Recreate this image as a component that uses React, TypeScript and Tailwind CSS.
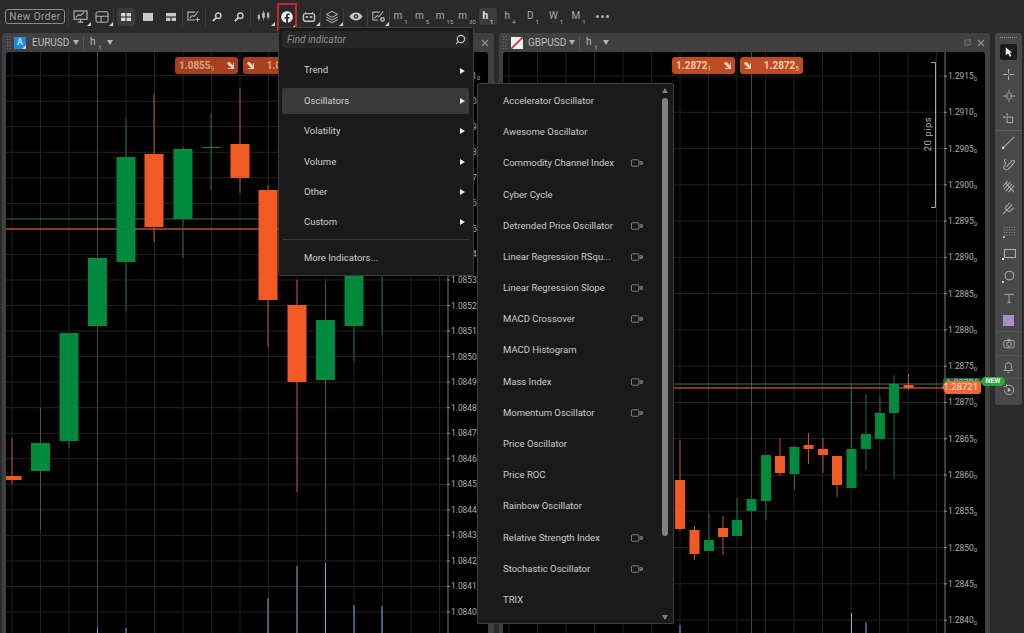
import React from "react";
import { FaFacebook } from "react-icons/fa";
import { Search } from "lucide-react";

type C = [number, number, number, number, number, "g" | "o"];
const ORANGE = "#f15a22";
const GREEN = "#008a3e";

const leftCandles: C[] = [
  [12, 476, 480, 438, 484, "o"],
  [40.5, 443, 471, 408, 530, "g"],
  [69, 333, 441, 333, 448, "g"],
  [97.5, 258, 326, 258, 326, "g"],
  [126, 157, 262, 118, 311, "g"],
  [154, 154, 227, 93, 242, "o"],
  [183, 149, 219, 147, 258, "g"],
  [211, 147, 148, 113, 190, "g"],
  [240, 144, 178, 88, 193, "o"],
  [268, 190, 300, 185, 347, "o"],
  [297, 305, 382, 280, 492, "o"],
  [325.5, 320, 380, 282, 560, "g"],
  [354, 260, 326, 250, 362, "g"],
  [382, 255, 265, 250, 335, "g"],
];
const rightCandles: C[] = [
  [680, 480, 529, 440, 531, "o"],
  [694.5, 530, 554, 526, 560, "o"],
  [709, 540, 551, 513, 551, "g"],
  [723, 528, 537, 516, 555, "o"],
  [737, 520, 536, 498, 536, "g"],
  [751.5, 499, 511, 499, 511, "g"],
  [766, 455, 501, 455, 520, "g"],
  [780, 456, 473, 438, 476, "o"],
  [794.5, 447, 474, 446, 490, "g"],
  [808.5, 445, 449, 433, 464, "o"],
  [823, 449, 455, 438, 473, "o"],
  [837, 456, 485, 456, 497, "o"],
  [851.5, 449, 488, 383, 488, "g"],
  [866, 434, 449, 394, 470, "g"],
  [880, 413, 439, 396, 439, "g"],
  [894, 384, 413, 375, 479, "g"],
  [908.5, 385, 388, 374, 390, "o"],
];

function Candles({ data, w }: { data: C[]; w: number }) {
  return (
    <g>
      {data.map(([x, t, b, wt, wb, c], i) => (
        <g key={i}>
          <line x1={x} x2={x} y1={wt} y2={wb} stroke={c === "g" ? "#17703f" : "#b9553a"} strokeWidth={1} />
          <rect x={x - w / 2} y={t} width={w} height={b - t} fill={c === "g" ? GREEN : ORANGE} />
        </g>
      ))}
    </g>
  );
}

function Axis({ x, labels }: { x: number; labels: [number, string, string][] }) {
  return (
    <g fontFamily="Roboto, sans-serif" fontSize={8.4} fill="#b0b0b0">
      {labels.map(([y, t, s]) => (
        <g key={t}>
          <line x1={x - 1} x2={x + 2} y1={y} y2={y} stroke="#8f8f8f" />
          <text x={x + 3} y={y + 3}>
            {t}
            <tspan fontSize={6} dy={1.5}>{s}</tspan>
          </text>
        </g>
      ))}
    </g>
  );
}

function LeftChart() {
  const vs = Array.from({ length: 16 }, (_, i) => 12 + 28.5 * i);
  const hs = Array.from({ length: 23 }, (_, i) => 612 - 25.54 * 22 + 25.54 * i);
  const labels: [number, string, string][] = Array.from({ length: 22 }, (_, i) => [
    612 - 25.54 * i,
    (1.084 + i * 0.0001).toFixed(4),
    "0",
  ]);
  return (
    <svg viewBox="6 52 482 581" className="block w-[482px] h-[581px]">
      <rect x="6" y="52" width="482" height="581" fill="#000" />
      {vs.map((x) => (x < 448 ? <line key={x} x1={x} x2={x} y1={52} y2={633} stroke="#232323" /> : null))}
      {hs.map((y) => (
        <line key={y} x1={6} x2={448} y1={y} y2={y} stroke="#232323" />
      ))}
      <line x1={97.5} x2={97.5} y1={52} y2={633} stroke="#444c46" />
      <line x1={6} x2={448} y1={219} y2={219} stroke="#2c6a47" />
      <line x1={6} x2={448} y1={229} y2={229} stroke="#f0703a" />
      <Candles data={leftCandles} w={19} />
      {[[97.5, 628], [126, 628], [268, 598], [297, 566], [325.5, 563], [354, 605], [382, 606]].map(([x, y]) => (
        <line key={x} x1={x} x2={x} y1={y} y2={633} stroke="#6fb0e0" />
      ))}
      <line x1={448} x2={448} y1={52} y2={633} stroke="#7a7a7a" />
      <Axis x={448} labels={labels} />
    </svg>
  );
}

function RightChart() {
  const vs = Array.from({ length: 16 }, (_, i) => 509 + 28.5 * i);
  const labels: [number, string, string][] = Array.from({ length: 16 }, (_, i) => [
    76 + 36.27 * i,
    (1.2915 - i * 0.0005).toFixed(4),
    "0",
  ]);
  return (
    <svg viewBox="503 52 482 581" className="block w-[482px] h-[581px]">
      <rect x="503" y="52" width="482" height="581" fill="#000" />
      {vs.map((x) => (x < 945 ? <line key={x} x1={x} x2={x} y1={52} y2={633} stroke="#232323" /> : null))}
      {labels.map(([y]) => (
        <line key={y} x1={503} x2={945} y1={y} y2={y} stroke="#232323" />
      ))}
      <line x1={751.5} x2={751.5} y1={52} y2={633} stroke="#444c46" />
      <line x1={503} x2={945} y1={384} y2={384} stroke="#3a7a55" />
      <line x1={503} x2={945} y1={388} y2={388} stroke="#f0703a" />
      <Candles data={rightCandles} w={10} />
      {[[680, 625], [851.5, 613], [866, 622]].map(([x, y]) => (
        <line key={x} x1={x} x2={x} y1={y} y2={633} stroke="#6fb0e0" />
      ))}
      <path d="M931 62.5H935.5V207.5H931" fill="none" stroke="#a8a8a8" />
      <text
        x={931}
        y={134}
        transform="rotate(-90 931 134)"
        textAnchor="middle"
        fontFamily="Roboto, sans-serif"
        fontSize={9.5}
        letterSpacing={0.5}
        fill="#a8a8a8"
      >
        20 pips
      </text>
      <line x1={945} x2={945} y1={52} y2={633} stroke="#7a7a7a" />
      <Axis x={945} labels={labels} />
    </svg>
  );
}

const Sep = () => <div className="w-px h-[18px] bg-[#3e3e3e] shrink-0" />;
const Corner = () => (
  <svg viewBox="0 0 4 4" className="absolute right-0 bottom-0 w-[4px] h-[4px]">
    <path d="M4 0V4H0Z" fill="#d0d0d0" />
  </svg>
);

function TB({ cls, children, corner }: { cls: string; children: React.ReactNode; corner?: boolean }) {
  return (
    <div className={`relative h-[18px] shrink-0 flex items-center justify-center ${cls}`}>
      {children}
      {corner && <Corner />}
    </div>
  );
}

function TF({ cls, l, n, active }: { cls: string; l: string; n: string; active?: boolean }) {
  return (
    <div
      className={`h-[17px] shrink-0 flex items-start justify-center pt-[2px] ${cls} ${
        active ? "bg-[#3c3c3c] rounded-[3px] text-[#e6e6e6] font-bold" : "text-[#aaaaaa]"
      }`}
    >
      <span className="text-[10px] leading-[11px]">{l}</span>
      <span className="text-[6px] leading-[7px] mt-[8px] ml-[2px] font-normal">{n}</span>
    </div>
  );
}

const stroke = { fill: "none", stroke: "#b4b4b4", strokeWidth: 1.2 } as const;

function Toolbar() {
  return (
    <div className="h-[33px] shrink-0 flex items-center pl-[5px] bg-[#2a2a2a]">
      <div className="w-[60px] h-[15px] shrink-0 flex items-center justify-center border border-[#8a8a8a] rounded-[3px] text-[10px] tracking-[0.5px] text-[#a0a0a0]">
        New Order
      </div>
      <div className="w-[3px] shrink-0" />
      <Sep />
      <TB cls="w-[22px]" corner>
        <svg viewBox="0 0 16 14" className="w-[15px] h-[13px]" {...stroke}>
          <rect x="1" y="1" width="14" height="9" />
          <path d="M3 8l3-3 2 1 4-4M8 10v3M5 13h6" />
        </svg>
      </TB>
      <TB cls="w-[22px]" corner>
        <svg viewBox="0 0 16 14" className="w-[14px] h-[12px]" {...stroke}>
          <rect x="1" y="1" width="14" height="12" rx="2" />
          <path d="M1 6h14M7 6v7" />
        </svg>
      </TB>
      <Sep />
      <div className="w-[3px] shrink-0" />
      <TB cls="w-[18px] bg-[#3c3c3c] rounded-[3px]">
        <svg viewBox="0 0 10 8" className="w-[10px] h-[8px]" fill="#d6d6d6">
          <rect width="4.4" height="3.4" />
          <rect x="5.6" width="4.4" height="3.4" />
          <rect y="4.6" width="4.4" height="3.4" />
          <rect x="5.6" y="4.6" width="4.4" height="3.4" />
        </svg>
      </TB>
      <div className="w-[2px] shrink-0" />
      <TB cls="w-[22px]">
        <div className="w-[10px] h-[8px] bg-[#c8c8c8]" />
      </TB>
      <TB cls="w-[23px]">
        <svg viewBox="0 0 10 8" className="w-[10px] h-[8px]" fill="#c8c8c8">
          <rect width="10" height="3.4" />
          <rect y="4.6" width="4.4" height="3.4" />
          <rect x="5.6" y="4.6" width="4.4" height="3.4" />
        </svg>
      </TB>
      <Sep />
      <TB cls="w-[22px]">
        <svg viewBox="0 0 16 14" className="w-[14px] h-[13px]" {...stroke}>
          <path d="M9 2H1v9h8M3 9l3-3 2 1 5-6" />
          <path d="M12 8v5M9.5 10.5h5" />
        </svg>
      </TB>
      <Sep />
      <TB cls="w-[22px]">
        <svg viewBox="0 0 12 12" className="w-[10px] h-[10px]" fill="none" stroke="#c4c4c4" strokeWidth="1.8">
          <circle cx="7.5" cy="4.5" r="3.2" />
          <path d="M5 7L1 11" strokeWidth="2.4" />
        </svg>
      </TB>
      <TB cls="w-[22px]">
        <svg viewBox="0 0 12 12" className="w-[10px] h-[10px]" fill="none" stroke="#c4c4c4" strokeWidth="1.8">
          <circle cx="7.5" cy="4.5" r="3.2" />
          <path d="M5 7L1 11" strokeWidth="2.4" />
        </svg>
      </TB>
      <Sep />
      <TB cls="w-[24px]" corner>
        <svg viewBox="0 0 14 14" className="w-[13px] h-[13px]" fill="#b8b8b8" stroke="#b8b8b8">
          <path d="M2 4v8M7 1v10M12 2v8" strokeWidth="0.8" />
          <rect x="0.8" y="5.5" width="2.4" height="4" stroke="none" />
          <rect x="5.6" y="3" width="2.8" height="5.5" stroke="none" />
          <rect x="10.8" y="3" width="2.4" height="5" stroke="none" />
        </svg>
      </TB>
      <div className="w-[2px] shrink-0" />
      <div className="relative w-[20px] h-[28px] shrink-0 flex items-center justify-center border-2 border-[#c1272d]">
        <FaFacebook className="w-[12px] h-[12px] text-[#ececec]" />
        <Corner />
      </div>
      <TB cls="w-[23px]" corner>
        <svg viewBox="0 0 16 14" className="w-[14px] h-[12px]">
          <rect x="1.5" y="3" width="13" height="9" rx="2.5" fill="none" stroke="#c4c4c4" strokeWidth="1.6" />
          <rect x="4" y="6" width="3" height="2" fill="#c4c4c4" />
          <rect x="9" y="6" width="3" height="2" fill="#c4c4c4" />
          <path d="M4 3V1M12 3V1" stroke="#c4c4c4" />
        </svg>
      </TB>
      <Sep />
      <TB cls="w-[22px]" corner>
        <svg viewBox="0 0 16 16" className="w-[14px] h-[14px]" fill="none" stroke="#bdbdbd" strokeWidth="1.1">
          <path d="M8 1.5l6.5 3.5L8 8.5 1.5 5z" />
          <path d="M1.5 8L8 11.5 14.5 8M1.5 11L8 14.5 14.5 11" />
        </svg>
      </TB>
      <Sep />
      <TB cls="w-[23px]">
        <svg viewBox="0 0 16 10" className="w-[14px] h-[9px]">
          <path d="M0.5 5C3 1.5 5.5 0.5 8 0.5S13 1.5 15.5 5C13 8.5 10.5 9.5 8 9.5S3 8.5 0.5 5Z" fill="#c8c8c8" />
          <circle cx="8" cy="5" r="2.6" fill="#2a2a2a" />
          <circle cx="8" cy="5" r="1.2" fill="#c8c8c8" />
        </svg>
      </TB>
      <Sep />
      <TB cls="w-[21px]" corner>
        <svg viewBox="0 0 16 14" className="w-[14px] h-[13px]" {...stroke}>
          <path d="M9 2H1v9h6M3 9l3-3 2 1 5-6" />
          <circle cx="12" cy="10.5" r="2" strokeWidth="1.6" />
        </svg>
      </TB>
      <Sep />
      <TF cls="w-[21px]" l="m" n="1" />
      <TF cls="w-[22px]" l="m" n="5" />
      <TF cls="w-[23px]" l="m" n="15" />
      <TF cls="w-[22px]" l="m" n="30" />
      <TF cls="w-[18px] ml-px mr-px" l="h" n="1" active />
      <TF cls="w-[22px] ml-px" l="h" n="4" />
      <TF cls="w-[24px]" l="D" n="1" />
      <TF cls="w-[22px]" l="W" n="1" />
      <TF cls="w-[23px]" l="M" n="1" />
      <TB cls="w-[24px] gap-[2px]">
        <span className="w-[3px] h-[3px] rounded-full bg-[#b0b0b0]" />
        <span className="w-[3px] h-[3px] rounded-full bg-[#b0b0b0]" />
        <span className="w-[3px] h-[3px] rounded-full bg-[#b0b0b0]" />
      </TB>
    </div>
  );
}

const Grip = () => (
  <svg viewBox="0 0 4 13" className="w-[4px] h-[13px] shrink-0" fill="#6c6c6c">
    {[0, 3, 6, 9, 12].map((y) => (
      <g key={y}>
        <rect x="0" y={y} width="1.2" height="1.2" />
        <rect x="2.6" y={y} width="1.2" height="1.2" />
      </g>
    ))}
  </svg>
);
const Drop = () => (
  <svg viewBox="0 0 6 5" className="w-[6px] h-[5px] shrink-0" fill="#b8b8b8">
    <path d="M0 0h6L3 5z" />
  </svg>
);
const Close = () => (
  <svg viewBox="0 0 8 8" className="w-[8px] h-[8px] shrink-0" stroke="#8f8f8f" strokeWidth="1.2">
    <path d="M1 1l6 6M7 1L1 7" />
  </svg>
);
const TfLabel = () => (
  <div className="flex items-start text-[#b8b8b8] mr-[2px] h-[14px] w-[15px]">
    <span className="text-[10px] leading-[11px]">h</span>
    <span className="text-[6px] leading-[7px] ml-[3px] mt-[8px]">1</span>
  </div>
);

function Tag({ cls, children }: { cls: string; children: React.ReactNode }) {
  return (
    <div
      className={`absolute top-[5px] w-[63px] h-[17px] rounded-[3px] flex items-center justify-between px-[4px] text-[10px] font-bold ${cls}`}
    >
      {children}
    </div>
  );
}
const DownArrow = () => (
  <svg viewBox="0 0 8 8" className="w-[7px] h-[7px] shrink-0" fill="#e0cfc6">
    <path d="M1 0h2l4 4V1h1v7H1V6.8h4L0 2z" />
  </svg>
);

function Panel({ cls, header, children }: { cls: string; header: React.ReactNode; children: React.ReactNode }) {
  return (
    <div className={`flex flex-col bg-[#404040] rounded-t-[3px] shrink-0 ${cls}`}>
      <div className="h-[19px] shrink-0 flex items-center">{header}</div>
      <div className="relative flex-1 overflow-hidden rounded-t-[3px] ml-[4px] w-[482px]">{children}</div>
    </div>
  );
}

const T = "w-[27px] h-[22px] shrink-0 flex items-center justify-center";
const tool = { fill: "none", stroke: "#adadad", strokeWidth: 1.1 } as const;

function ToolPanel() {
  return (
    <div className="w-[27px] h-[372px] shrink-0 bg-[#484848] rounded-[3px] pt-[8px] flex flex-col items-center relative">
      <div className="absolute top-[4px] left-[5px] w-[17px] h-[2px] border-t border-dotted border-[#8a8a8a]" />
      <div className={T}>
        <div className="w-[17px] h-[16px] bg-[#1b1b1b] rounded-[2px] flex items-center justify-center">
          <svg viewBox="0 0 10 12" className="w-[8px] h-[10px]" fill="#ededed">
            <path d="M1 0l8 7H6l2 4-2 1-2-4-3 2z" />
          </svg>
        </div>
      </div>
      <div className={T}>
        <svg viewBox="0 0 12 12" className="w-[11px] h-[11px]" {...tool}>
          <path d="M6 0v5M6 7v5M0 6h5M7 6h5" />
        </svg>
      </div>
      <div className={T}>
        <svg viewBox="0 0 12 12" className="w-[12px] h-[12px]" {...tool}>
          <path d="M6 0v4M6 8v4M0 6h4M8 6h4M4 3v6M8 3v6" strokeWidth="0.9" />
        </svg>
      </div>
      <div className={T}>
        <svg viewBox="0 0 12 12" className="w-[11px] h-[11px]" {...tool}>
          <path d="M4.5 0v3M0 4.5h3" />
          <rect x="4.5" y="4.5" width="6" height="6" />
        </svg>
      </div>
      <div className="w-[27px] h-[2px] border-b border-[#5e5e5e] shrink-0" />
      <div className={T}>
        <svg viewBox="0 0 14 14" className="w-[13px] h-[13px]" {...tool}>
          <path d="M1 13L13 1" />
          <rect x="0" y="11.5" width="2.4" height="2.4" fill="#d0d0d0" stroke="none" />
        </svg>
      </div>
      <div className={T}>
        <svg viewBox="0 0 14 14" className="w-[13px] h-[13px]" {...tool}>
          <path d="M4 1C0 3 6 5 3 8s1 6 4 4l6-7a1.5 1.5 0 0 0-2.5-2L5 9.5" />
        </svg>
      </div>
      <div className={T}>
        <svg viewBox="0 0 14 14" className="w-[13px] h-[13px]" {...tool}>
          <path d="M1 7l5-6M2 10l7-8M4 12l7-8M7 13l6-7M4 3l9 10" />
        </svg>
      </div>
      <div className={T}>
        <svg viewBox="0 0 14 14" className="w-[13px] h-[13px]" {...tool}>
          <path d="M1 13l4-4M5 9L3.5 6 8 1M5 9l3 1.5 5-4.5M5 9l6-6.5" />
        </svg>
      </div>
      <div className="w-[27px] h-[2px] shrink-0" />
      <div className={T}>
        <svg viewBox="0 0 14 14" className="w-[12px] h-[12px]" fill="#a8a8a8">
          {[1, 4, 7, 10].map((y) =>
            [1, 4, 7, 10, 13].map((x) => <rect key={`${x}-${y}`} x={x} y={y} width="1" height="1" />)
          )}
          <rect x="0" y="12" width="2" height="2" fill="#e0e0e0" />
        </svg>
      </div>
      <div className={T}>
        <svg viewBox="0 0 14 12" className="w-[14px] h-[12px]" {...tool}>
          <rect x="2.5" y="1.5" width="11" height="8" />
          <rect x="0" y="10" width="2" height="2" fill="#e0e0e0" stroke="none" />
        </svg>
      </div>
      <div className={T}>
        <svg viewBox="0 0 14 14" className="w-[13px] h-[13px]" {...tool}>
          <circle cx="8" cy="6" r="4.7" />
          <rect x="0" y="12" width="2" height="2" fill="#e0e0e0" stroke="none" />
        </svg>
      </div>
      <div className={T}>
        <svg viewBox="0 0 12 12" className="w-[10px] h-[11px]" {...tool}>
          <path d="M1 2V1h10v1M6 1v10M4 11h4" />
        </svg>
      </div>
      <div className={T}>
        <div className="w-[11px] h-[11px] bg-[#a98bc9]" />
      </div>
      <div className="w-[27px] h-[1px] bg-[#525252] shrink-0" />
      <div className={T}>
        <svg viewBox="0 0 14 12" className="w-[12px] h-[11px]" {...tool}>
          <rect x="1" y="2.5" width="12" height="8.5" rx="2" />
          <circle cx="7" cy="6.7" r="2.7" />
          <path d="M5 2.5l1-1.5h2l1 1.5" />
        </svg>
      </div>
      <div className="w-[27px] h-[2px] shrink-0 border-b border-[#525252]" />
      <div className={T}>
        <svg viewBox="0 0 12 14" className="w-[11px] h-[12px]" {...tool}>
          <path d="M1 11h10L9.5 9V5.5a3.5 3.5 0 0 0-7 0V9zM6 1v1M4.5 13h3" />
        </svg>
      </div>
      <div className="w-[27px] h-[1px] shrink-0 bg-[#525252]" />
      <div className={T}>
        <svg viewBox="0 0 14 14" className="w-[12px] h-[12px]" {...tool}>
          <path d="M4 2.2A5.5 5.5 0 1 1 1.5 7M4 0v3H1" />
          <path d="M5.5 4.5l4 2.5-4 2.5z" fill="#bcbcbc" stroke="none" />
        </svg>
      </div>
    </div>
  );
}

const Arrow = () => (
  <svg viewBox="0 0 5 6" className="w-[5px] h-[6px] shrink-0" fill="#e8e8e8">
    <path d="M0 0l5 3-5 3z" />
  </svg>
);
const Cam = () => (
  <svg viewBox="0 0 13 8" className="w-[12px] h-[8px] shrink-0" fill="none" stroke="#969696" strokeWidth="0.9">
    <rect x="0.5" y="0.5" width="8" height="7" rx="1.2" />
    <path d="M9.5 3.8L11 1.8v4.4zM12.4 2.5v3" />
  </svg>
);

const m1 = ["Trend", "Oscillators", "Volatility", "Volume", "Other", "Custom"];
const m2: [string, boolean][] = [
  ["Accelerator Oscillator", false],
  ["Awesome Oscillator", false],
  ["Commodity Channel Index", true],
  ["Cyber Cycle", false],
  ["Detrended Price Oscillator", true],
  ["Linear Regression RSqu...", true],
  ["Linear Regression Slope", true],
  ["MACD Crossover", true],
  ["MACD Histogram", false],
  ["Mass Index", true],
  ["Momentum Oscillator", true],
  ["Price Oscillator", false],
  ["Price ROC", false],
  ["Rainbow Oscillator", false],
  ["Relative Strength Index", true],
  ["Stochastic Oscillator", true],
  ["TRIX", false],
];

export default function App() {
  return (
    <div className="relative w-[1024px] h-[633px] overflow-hidden flex flex-col bg-[#2a2a2a] font-['Roboto',Arial,sans-serif]">
      <Toolbar />
      <div className="flex-1 min-h-0 flex pl-[2px]">
        <Panel
          cls="w-[492px]"
          header={
            <>
              <div className="w-[5px]" />
              <Grip />
              <div className="relative ml-[3px] w-[12px] h-[12px] bg-[#1e88e5] flex items-center justify-center text-[9px] text-white shrink-0">
                A
                <Corner />
              </div>
              <span className="ml-[6px] text-[10px] text-[#bdbdbd] w-[38px]">EURUSD</span>
              <div className="ml-[3px]"><Drop /></div>
              <div className="w-px h-[14px] bg-[#585858] mx-[4px]" />
              <div className="ml-[2px]"><TfLabel /></div>
              <Drop />
              <div className="flex-1" />
              <div className="mr-[5px]"><Close /></div>
            </>
          }
        >
          <LeftChart />
          <Tag cls="left-[169px] bg-[#a8401d] text-[#d6a48e]">
            <span>1.0855<sub className="text-[6.5px] font-normal">9</sub></span>
            <DownArrow />
          </Tag>
          <Tag cls="left-[237px] bg-[#a8401d] text-[#d6a48e]">
            <DownArrow />
            <span>1.0855<sub className="text-[6.5px] font-normal">9</sub></span>
          </Tag>
        </Panel>
        <div className="w-[5px] shrink-0" />
        <Panel
          cls="w-[491px]"
          header={
            <>
              <div className="w-[4px]" />
              <Grip />
              <svg viewBox="0 0 12 12" className="ml-[4px] w-[12px] h-[12px] shrink-0">
                <rect width="12" height="12" fill="#f0f0f0" />
                <path d="M0 12L12 0" stroke="#d32f3a" strokeWidth="1.8" />
              </svg>
              <span className="ml-[5px] text-[10px] text-[#bdbdbd] w-[38px]">GBPUSD</span>
              <div className="ml-[3px]"><Drop /></div>
              <div className="w-px h-[14px] bg-[#585858] mx-[4px]" />
              <div className="ml-[2px]"><TfLabel /></div>
              <Drop />
              <div className="flex-1" />
              <svg viewBox="0 0 8 8" className="w-[7px] h-[7px] shrink-0 mr-[6px]" fill="none" stroke="#808080">
                <path d="M4 1H1v6h6V4M4 4l3.5-3.5M5 .5h2.5V3" />
              </svg>
              <div className="mr-[5px]"><Close /></div>
            </>
          }
        >
          <RightChart />
          <Tag cls="left-[169px] bg-[#bf4c20] text-[#eccbb9]">
            <span>1.2872<sub className="text-[6.5px] font-normal">1</sub></span>
            <DownArrow />
          </Tag>
          <Tag cls="left-[237px] bg-[#bf4c20] text-[#eccbb9]">
            <DownArrow />
            <span>1.2872<sub className="text-[6.5px] font-normal">5</sub></span>
          </Tag>
        </Panel>
        <div className="w-[5px] shrink-0" />
        <ToolPanel />
      </div>

      {/* price labels over the right chart */}
      <div className="absolute left-[943px] top-[378px] w-[38px] h-[12px] rounded-[3px] bg-[#1f6f45] text-[9px] leading-[10px] text-[#9cc7ad] pl-[3px]">
        1.28726
      </div>
      <div className="absolute left-[942px] top-[381px] w-[39px] h-[13px] bg-[#ef6a33] rounded-r-[3px] [clip-path:polygon(4px_0,100%_0,100%_100%,4px_100%,0_50%)] flex items-center justify-end pr-[3px] text-[9.5px] text-[#ffe3d4]">
        1.28721
      </div>
      <div className="absolute left-[981px] top-[377px] w-[24px] h-[9px] rounded-full bg-[#26a83f] flex items-center justify-center text-[7px] font-bold text-[#e8f8e6]">
        NEW
      </div>

      {/* first menu */}
      <div className="absolute left-[278px] top-[27px] w-[196px] h-[249px] bg-[#1a1a1a] border border-[#3e3e3e] rounded-[2px] pl-[3px] pr-[4px] pt-[3px] text-[#d0d0d0] text-[9.5px]">
        <div className="h-[17px] bg-[#262626] rounded-[2px] flex items-center justify-between pl-[5px] pr-[3px]">
          <span className="italic text-[#8e8e8e] text-[10px]">Find indicator</span>
          <Search className="w-[11px] h-[11px] text-[#c4c4c4] -scale-x-100" strokeWidth={2.6} />
        </div>
        <div className="flex flex-col gap-[4.4px] mt-[9.5px]">
          {m1.map((t) => (
            <div
              key={t}
              className={`h-[26px] shrink-0 rounded-[2px] flex items-center justify-between pl-[22px] pr-[4px] ${
                t === "Oscillators" ? "bg-[#3a3a3a]" : ""
              }`}
            >
              <span>{t}</span>
              <Arrow />
            </div>
          ))}
        </div>
        <div className="h-px bg-[#3a3a3a] mt-[4px]" />
        <div className="h-[26px] mt-[4.5px] flex items-center pl-[22px]">More Indicators...</div>
      </div>

      {/* second menu */}
      <div className="absolute left-[477px] top-[83px] w-[197px] h-[541px] bg-[#1a1a1a] border border-[#3e3e3e] rounded-[2px] pt-[1.5px] text-[#cccccc] text-[9.5px] overflow-hidden">
        {m2.map(([t, v]) => (
          <div key={t} className="h-[31.2px] flex items-center pl-[25px]">
            <span className="w-[128px] whitespace-nowrap">{t}</span>
            {v && <Cam />}
          </div>
        ))}
        <div className="absolute right-[5px] top-[14px] w-[6px] h-[438px] rounded-full bg-[#808080]" />
        <svg viewBox="0 0 6 5" className="absolute right-[5px] top-[4px] w-[6px] h-[5px]" fill="#808080">
          <path d="M3 0l3 5H0z" />
        </svg>
        <svg viewBox="0 0 6 5" className="absolute right-[5px] bottom-[3px] w-[6px] h-[5px]" fill="#808080">
          <path d="M0 0h6L3 5z" />
        </svg>
      </div>
    </div>
  );
}
